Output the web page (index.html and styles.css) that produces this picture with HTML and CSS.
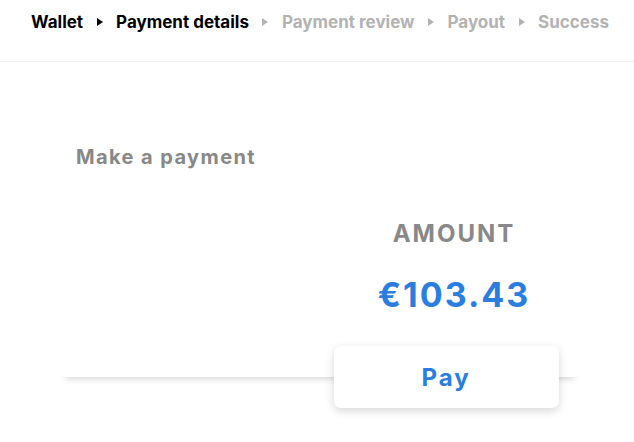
FILE: index.html
```html
<!DOCTYPE html>
<html lang="en">
<head>
    <meta charset="UTF-8">
    <meta name="viewport" content="width=device-width, initial-scale=1.0">
    <title>Make a payment</title>
    <link rel="stylesheet" href="styles.css">
</head>
<body>
    <nav class="steps">
        <span class="step done">Wallet</span>
        <span class="arrow done"></span>
        <span class="step done">Payment details</span>
        <span class="arrow"></span>
        <span class="step">Payment review</span>
        <span class="arrow"></span>
        <span class="step">Payout</span>
        <span class="arrow"></span>
        <span class="step">Success</span>
    </nav>

    <div class="card">
        <div class="card-left">
            <h2>Make a payment</h2>
        </div>
        <div class="card-right">
            <div class="label">AMOUNT</div>
            <div class="amount">€103.43</div>
            <button type="button" class="pay">Pay</button>
        </div>
    </div>
</body>
</html>
```

FILE: styles.css
```css
html, body {
    min-height: 100%;
}
body {
    font-family: Inter, "Liberation Sans", sans-serif;
    margin: 0;
    min-height: 100vh;
    background-color: #fff;
}
.steps {
    display: flex;
    align-items: center;
    gap: 13.5px;
    height: 62px;
    padding: 0 0 17px 31px;
    border-bottom: 1px solid #eeeeee;
    box-sizing: border-box;
    font-size: 17px;
    font-weight: 700;
    color: #b3b3b3;
}
.step.done {
    color: #000;
}
.arrow {
    width: 0;
    height: 0;
    border-top: 4px solid transparent;
    border-bottom: 4px solid transparent;
    border-left: 6px solid #b3b3b3;
}
.arrow.done {
    border-left-color: #000;
}
.card {
    display: flex;
    width: 520px;
    margin-left: 60px;
    border-radius: 0 0 6px 6px;
    background-color: #fff;
    box-shadow: 0 8px 6px -6px rgba(0, 0, 0, 0.16);
}
.card-left {
    flex: 1;
    padding: 83px 0 0 16px;
}
.card-left h2 {
    margin: 0;
    font-size: 20px;
    font-weight: 700;
    letter-spacing: 1.4px;
    color: #888;
}
.card-right {
    flex: 1;
    display: flex;
    flex-direction: column;
    align-items: center;
    padding-top: 157px;
}
.label {
    font-size: 24px;
    font-weight: 700;
    color: #888;
    letter-spacing: 2px;
}
.amount {
    margin-top: 26px;
    font-size: 34px;
    font-weight: 700;
    letter-spacing: 2px;
    color: #2a7de1;
}
.pay {
    width: 225px;
    height: 62px;
    margin: 31px 16px -31px 0;
    border: none;
    border-radius: 7px;
    background-color: #fff;
    box-shadow: 0 3px 10px rgba(0, 0, 0, 0.16);
    font-family: inherit;
    font-size: 24px;
    font-weight: 700;
    letter-spacing: 2px;
    color: #2a7de1;
    cursor: pointer;
}
```
